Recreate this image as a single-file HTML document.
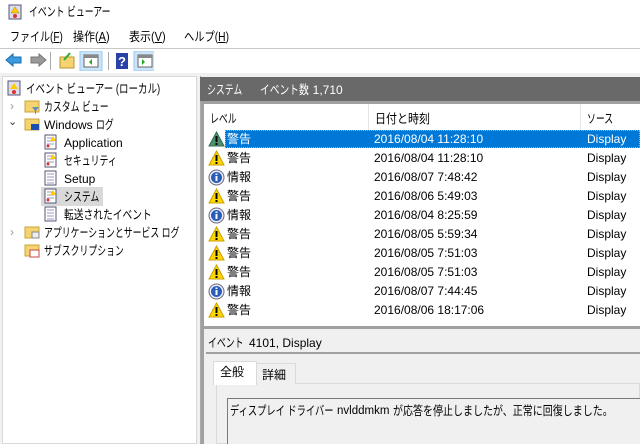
<!DOCTYPE html>
<html><head><meta charset="utf-8"><style>
*{margin:0;padding:0;box-sizing:border-box}
body{width:640px;height:444px;overflow:hidden;background:#f0f0f0;font-family:"Liberation Sans","Noto Sans CJK JP",sans-serif;font-size:12px;line-height:14px;color:#000;position:relative}
.a{position:absolute;white-space:nowrap}
.j{font-size:12.5px;transform:scaleX(.71);transform-origin:0 0}
.row{position:absolute;left:205px;width:435px;height:19px}
.row span{position:absolute;top:2px}
</style></head><body>
<div class="a" style="left:0;top:0;width:640px;height:24px;background:#fff"></div>
<svg class="a" style="left:8px;top:4px" width="14" height="16"><rect x="1" y="1" width="12" height="14" fill="#dde" stroke="#557"/><path d="M7 3L11 9H3Z" fill="#fc0" stroke="#a80" stroke-width=".5"/><circle cx="7" cy="12" r="2" fill="#d33"/></svg>
<div class="a j" style="left:29px;top:5px">イベント ビューアー</div>
<div class="a" style="left:0;top:24px;width:640px;height:24px;background:#fff"></div>
<div class="a j" style="left:10px;top:30px;transform:scaleX(.8)">ファイル(<u>F</u>)</div>
<div class="a j" style="left:73px;top:30px;transform:scaleX(.88)">操作(<u>A</u>)</div>
<div class="a j" style="left:129px;top:30px;transform:scaleX(.88)">表示(<u>V</u>)</div>
<div class="a j" style="left:184px;top:30px;transform:scaleX(.82)">ヘルプ(<u>H</u>)</div>
<div class="a" style="left:0;top:48px;width:640px;height:1px;background:#c8c8c8"></div>
<div class="a" style="left:0;top:49px;width:640px;height:24px;background:#fff"></div>
<svg class="a" style="left:4px;top:51px" width="150" height="20">
<path d="M2 9L9 3V6H17V12H9V15Z" fill="#3b9be0" stroke="#1a6cb0"/>
<path d="M42 9L35 3V6H27V12H35V15Z" fill="#999" stroke="#777"/>
<rect x="46" y="1" width="1" height="18" fill="#aaa"/>
<rect x="56" y="6" width="14" height="11" fill="#f5d370" stroke="#b9972d"/><path d="M60 9L66 2" stroke="#3a3" stroke-width="2"/>
<rect x="76" y="0" width="22" height="20" fill="#cce4f7" stroke="#99c9ef"/><rect x="80" y="4" width="14" height="12" fill="#fff" stroke="#666"/><rect x="80" y="4" width="14" height="3" fill="#888"/><path d="M88 8L85 11L88 14Z" fill="#2a2"/>
<rect x="104" y="1" width="1" height="18" fill="#aaa"/>
<rect x="112" y="2" width="12" height="16" fill="#2942a8"/><text x="114" y="15" fill="#fff" font-size="13" font-weight="bold" font-family="Liberation Sans">?</text>
<rect x="130" y="0" width="22" height="20" fill="#cce4f7" stroke="#99c9ef"/><rect x="134" y="4" width="14" height="12" fill="#fff" stroke="#666"/><rect x="134" y="4" width="14" height="3" fill="#888"/><path d="M138 8L141 11L138 14Z" fill="#2a2"/>
</svg>
<div class="a" style="left:2px;top:76px;width:195px;height:368px;background:#fff;border:1px solid #d9d9d9"></div>
<svg class="a" style="left:7px;top:80px" width="14" height="16"><rect x="1" y="1" width="12" height="14" fill="#dde" stroke="#557"/><path d="M7 3L11 9H3Z" fill="#fc0"/><circle cx="7" cy="12" r="2" fill="#d33"/></svg>
<div class="a j" style="left:26px;top:82px;transform:scaleX(.76)">イベント ビューアー (ローカル)</div>
<div class="a" style="left:10px;top:99px;color:#999">›</div>
<svg class="a" style="left:24px;top:98px" width="16" height="16"><rect x="1" y="3" width="14" height="11" fill="#f5d370" stroke="#c9a33d"/><path d="M8 9H15L12 13V16H11V13Z" fill="#6a8db5"/></svg>
<div class="a j" style="left:44px;top:100px">カスタム ビュー</div>
<div class="a" style="left:8px;top:115px;color:#333;font-size:11px">⌄</div>
<svg class="a" style="left:24px;top:116px" width="16" height="16"><rect x="1" y="3" width="14" height="11" fill="#f5d370" stroke="#c9a33d"/><rect x="7" y="8" width="8" height="6" fill="#1b4fb0"/></svg>
<div class="a" style="left:44px;top:118px">Windows</div>
<div class="a j" style="left:96px;top:118px">ログ</div>
<svg class="a" style="left:44px;top:134px" width="14" height="16"><rect x="1" y="1" width="11" height="14" fill="#fff" stroke="#557"/><path d="M3 4H10M3 7H10M3 10H10" stroke="#99b"/><path d="M9 2L12 7H6Z" fill="#fc0"/><circle cx="4" cy="12" r="1.5" fill="#d33"/></svg>
<div class="a" style="left:64px;top:136px">Application</div>
<svg class="a" style="left:44px;top:152px" width="14" height="16"><rect x="1" y="1" width="11" height="14" fill="#fff" stroke="#557"/><path d="M3 4H10M3 7H10M3 10H10" stroke="#99b"/><path d="M9 2L12 7H6Z" fill="#fc0"/><circle cx="4" cy="12" r="1.5" fill="#d33"/></svg>
<div class="a j" style="left:64px;top:154px">セキュリティ</div>
<svg class="a" style="left:44px;top:170px" width="14" height="16"><rect x="1" y="1" width="11" height="14" fill="#fff" stroke="#557"/><path d="M3 4H10M3 7H10M3 10H10M3 13H10" stroke="#99b"/></svg>
<div class="a" style="left:64px;top:172px">Setup</div>
<div class="a" style="left:41px;top:187px;width:62px;height:19px;background:#d9d9d9"></div>
<svg class="a" style="left:44px;top:188px" width="14" height="16"><rect x="1" y="1" width="11" height="14" fill="#fff" stroke="#557"/><path d="M3 4H10M3 7H10M3 10H10" stroke="#99b"/><path d="M9 2L12 7H6Z" fill="#fc0"/><circle cx="4" cy="12" r="1.5" fill="#d33"/></svg>
<div class="a j" style="left:64px;top:190px">システム</div>
<svg class="a" style="left:44px;top:206px" width="14" height="16"><rect x="1" y="1" width="11" height="14" fill="#fff" stroke="#557"/><path d="M3 4H10M3 7H10M3 10H10M3 13H10" stroke="#99b"/></svg>
<div class="a j" style="left:64px;top:208px;transform:scaleX(.78)">転送されたイベント</div>
<div class="a" style="left:10px;top:225px;color:#999">›</div>
<svg class="a" style="left:24px;top:224px" width="16" height="16"><rect x="1" y="3" width="14" height="11" fill="#f5d370" stroke="#c9a33d"/><rect x="8" y="8" width="7" height="6" fill="#eee" stroke="#888"/></svg>
<div class="a j" style="left:44px;top:226px">アプリケーションとサービス ログ</div>
<svg class="a" style="left:24px;top:242px" width="16" height="16"><rect x="1" y="3" width="14" height="11" fill="#f5d370" stroke="#c9a33d"/><rect x="6" y="8" width="9" height="7" fill="#fff" stroke="#c44"/></svg>
<div class="a j" style="left:44px;top:244px">サブスクリプション</div>
<div class="a" style="left:200px;top:76px;width:440px;height:368px;background:#f0f0f0;border-left:1px solid #aaa"></div>
<div class="a" style="left:200px;top:77px;width:440px;height:24px;background:#696969"></div>
<div class="a j" style="left:207px;top:83px;color:#fff">システム</div>
<div class="a j" style="left:260px;top:83px;color:#fff;transform:scaleX(.78)">イベント数</div>
<div class="a" style="left:306px;top:83px;color:#fff">: 1,710</div>
<div class="a" style="left:201px;top:101px;width:439px;height:226px;background:#fff;border:3px solid #a0a0a0;border-right:none;border-bottom:none"></div>
<div class="a" style="left:368px;top:104px;width:1px;height:26px;background:#e5e5e5"></div>
<div class="a" style="left:580px;top:104px;width:1px;height:26px;background:#e5e5e5"></div>
<div class="a j" style="left:210px;top:112px">レベル</div>
<div class="a j" style="left:375px;top:112px;transform:scaleX(.88)">日付と時刻</div>
<div class="a j" style="left:587px;top:112px">ソース</div>
<div class="row" style="top:130px"><div class="a" style="left:20px;top:0;width:415px;height:18px;background:#0078d7;border:1px dotted #f0a050"></div><svg class="a" style="left:3px;top:1px" width="17" height="16"><path d="M8.5 1L16 15H1Z" fill="#4f8f6f" stroke="#2f6f4f"/><rect x="7.5" y="5" width="2" height="6" fill="#000"/><rect x="7.5" y="12" width="2" height="2" fill="#000"/></svg><span style="left:22px;color:#fff">警告</span><span style="left:169px;color:#fff">2016/08/04 11:28:10</span><span style="left:382px;color:#fff">Display</span></div>
<div class="row" style="top:149px"><svg class="a" style="left:3px;top:1px" width="17" height="16"><path d="M8.5 1L16 15H1Z" fill="#ffd700" stroke="#c8a000"/><rect x="7.5" y="5" width="2" height="6"/><rect x="7.5" y="12" width="2" height="2"/></svg><span style="left:22px">警告</span><span style="left:169px">2016/08/04 11:28:10</span><span style="left:382px">Display</span></div>
<div class="row" style="top:168px"><svg class="a" style="left:3px;top:1px" width="17" height="17"><circle cx="8.5" cy="8.5" r="7.5" fill="#eef" stroke="#667"/><circle cx="8.5" cy="8.5" r="5.5" fill="#2a5db8"/><rect x="7.5" y="7" width="2" height="5" fill="#fff"/><rect x="7.5" y="4.5" width="2" height="1.5" fill="#fff"/></svg><span style="left:22px">情報</span><span style="left:169px">2016/08/07 7:48:42</span><span style="left:382px">Display</span></div>
<div class="row" style="top:187px"><svg class="a" style="left:3px;top:1px" width="17" height="16"><path d="M8.5 1L16 15H1Z" fill="#ffd700" stroke="#c8a000"/><rect x="7.5" y="5" width="2" height="6"/><rect x="7.5" y="12" width="2" height="2"/></svg><span style="left:22px">警告</span><span style="left:169px">2016/08/06 5:49:03</span><span style="left:382px">Display</span></div>
<div class="row" style="top:206px"><svg class="a" style="left:3px;top:1px" width="17" height="17"><circle cx="8.5" cy="8.5" r="7.5" fill="#eef" stroke="#667"/><circle cx="8.5" cy="8.5" r="5.5" fill="#2a5db8"/><rect x="7.5" y="7" width="2" height="5" fill="#fff"/><rect x="7.5" y="4.5" width="2" height="1.5" fill="#fff"/></svg><span style="left:22px">情報</span><span style="left:169px">2016/08/04 8:25:59</span><span style="left:382px">Display</span></div>
<div class="row" style="top:225px"><svg class="a" style="left:3px;top:1px" width="17" height="16"><path d="M8.5 1L16 15H1Z" fill="#ffd700" stroke="#c8a000"/><rect x="7.5" y="5" width="2" height="6"/><rect x="7.5" y="12" width="2" height="2"/></svg><span style="left:22px">警告</span><span style="left:169px">2016/08/05 5:59:34</span><span style="left:382px">Display</span></div>
<div class="row" style="top:244px"><svg class="a" style="left:3px;top:1px" width="17" height="16"><path d="M8.5 1L16 15H1Z" fill="#ffd700" stroke="#c8a000"/><rect x="7.5" y="5" width="2" height="6"/><rect x="7.5" y="12" width="2" height="2"/></svg><span style="left:22px">警告</span><span style="left:169px">2016/08/05 7:51:03</span><span style="left:382px">Display</span></div>
<div class="row" style="top:263px"><svg class="a" style="left:3px;top:1px" width="17" height="16"><path d="M8.5 1L16 15H1Z" fill="#ffd700" stroke="#c8a000"/><rect x="7.5" y="5" width="2" height="6"/><rect x="7.5" y="12" width="2" height="2"/></svg><span style="left:22px">警告</span><span style="left:169px">2016/08/05 7:51:03</span><span style="left:382px">Display</span></div>
<div class="row" style="top:282px"><svg class="a" style="left:3px;top:1px" width="17" height="17"><circle cx="8.5" cy="8.5" r="7.5" fill="#eef" stroke="#667"/><circle cx="8.5" cy="8.5" r="5.5" fill="#2a5db8"/><rect x="7.5" y="7" width="2" height="5" fill="#fff"/><rect x="7.5" y="4.5" width="2" height="1.5" fill="#fff"/></svg><span style="left:22px">情報</span><span style="left:169px">2016/08/07 7:44:45</span><span style="left:382px">Display</span></div>
<div class="row" style="top:301px"><svg class="a" style="left:3px;top:1px" width="17" height="16"><path d="M8.5 1L16 15H1Z" fill="#ffd700" stroke="#c8a000"/><rect x="7.5" y="5" width="2" height="6"/><rect x="7.5" y="12" width="2" height="2"/></svg><span style="left:22px">警告</span><span style="left:169px">2016/08/06 18:17:06</span><span style="left:382px">Display</span></div>
<div class="a" style="left:201px;top:326px;width:439px;height:118px;background:#f0f0f0;border-top:3px solid #a0a0a0;border-left:3px solid #a0a0a0"></div>
<div class="a j" style="left:208px;top:336px">イベント</div>
<div class="a" style="left:249px;top:336px">4101, Display</div>
<div class="a" style="left:206px;top:352px;width:434px;height:2px;background:#a0a0a0"></div>
<div class="a" style="left:216px;top:383px;width:424px;height:61px;background:#f0f0f0;border:1px solid #dadada"></div>
<div class="a" style="left:256px;top:363px;width:40px;height:21px;background:#f0f0f0;border:1px solid #dadada;border-bottom:none"></div>
<div class="a" style="left:262px;top:368px">詳細</div>
<div class="a" style="left:213px;top:361px;width:44px;height:24px;background:#fff;border:1px solid #dadada;border-bottom:none"></div>
<div class="a" style="left:220px;top:365px">全般</div>
<div class="a" style="left:227px;top:398px;width:413px;height:46px;background:#f0f0f0;border:1px solid #7a7a7a;border-right:none;border-bottom:none"></div>
<div class="a j" style="left:230px;top:404px;transform:scaleX(.74)">ディスプレイ ドライバー</div>
<div class="a" style="left:337px;top:404px;font-size:11.5px">nvlddmkm</div>
<div class="a j" style="left:393px;top:404px;transform:scaleX(.8)">が応答を停止しましたが、正常に回復しました。</div>
</body></html>
